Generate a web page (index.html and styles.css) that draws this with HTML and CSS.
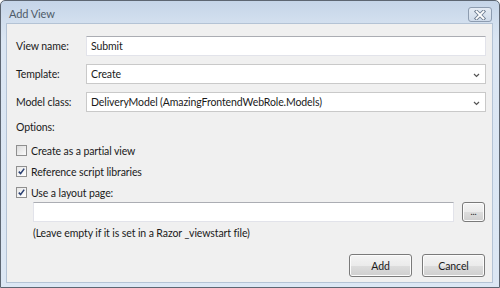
FILE: index.html
```html
<!DOCTYPE html>
<html>
<head>
<meta charset="utf-8">
<link rel="stylesheet" href="styles.css">
</head>
<body>
<div class="window">
  <div class="titlebar">
    <span class="title">Add View</span>
    <div class="close">
      <svg width="14" height="10" viewBox="0 0 14 10">
        <path d="M3.5 1.5 L10.5 8.5 M10.5 1.5 L3.5 8.5" stroke="#6f7e92" stroke-width="3.6" stroke-linecap="square"/>
        <path d="M3.5 1.5 L10.5 8.5 M10.5 1.5 L3.5 8.5" stroke="#ffffff" stroke-width="1.8" stroke-linecap="square"/>
      </svg>
    </div>
  </div>
  <div class="client">
    <div class="row">
      <label class="lbl">View name:</label>
      <div class="field">Submit</div>
    </div>
    <div class="row">
      <label class="lbl">Template:</label>
      <div class="field select">Create<svg class="chev" width="7" height="5" viewBox="0 0 7 5"><path d="M1 1 L3.5 3.5 L6 1" fill="none" stroke="#555" stroke-width="1.2"/></svg></div>
    </div>
    <div class="row">
      <label class="lbl">Model class:</label>
      <div class="field select">DeliveryModel (AmazingFrontendWebRole.Models)<svg class="chev" width="7" height="5" viewBox="0 0 7 5"><path d="M1 1 L3.5 3.5 L6 1" fill="none" stroke="#555" stroke-width="1.2"/></svg></div>
    </div>
    <div class="options">Options:</div>
    <div class="check first"><span class="box"></span>Create as a partial view</div>
    <div class="check"><span class="box on"><svg width="9" height="9" viewBox="0 0 9 9"><path d="M1.8 4.6 L3.6 6.6 L7.2 1.6" fill="none" stroke="#2b4173" stroke-width="1.6"/></svg></span>Reference script libraries</div>
    <div class="check"><span class="box on"><svg width="9" height="9" viewBox="0 0 9 9"><path d="M1.8 4.6 L3.6 6.6 L7.2 1.6" fill="none" stroke="#2b4173" stroke-width="1.6"/></svg></span>Use a layout page:</div>
    <div class="layoutrow">
      <div class="field wide"></div>
      <div class="btn small">...</div>
    </div>
    <div class="hint">(Leave empty if it is set in a Razor _viewstart file)</div>
    <div class="buttons">
      <div class="btn">Add</div>
      <div class="btn">Cancel</div>
    </div>
  </div>
</div>
</body>
</html>
```
FILE: styles.css
```css
html, body {
  margin: 0;
  padding: 0;
  background: #ffffff;
}
body {
  font-family: "Lato", "Open Sans", sans-serif;
  font-size: 10.5px;
  letter-spacing: -0.1px;
  color: #1a1a1a;
}
.window {
  width: 500px;
  height: 288px;
  box-sizing: border-box;
  border: 1px solid #5d6672;
  border-radius: 5px 5px 0 0;
  background: linear-gradient(#c5d5e8, #d3e0ef 22px, #dbe6f3 40px, #dce7f4);
  display: flex;
  flex-direction: column;
  padding: 0 6px 4px 5px;
}
.titlebar {
  height: 22px;
  display: flex;
  align-items: center;
  justify-content: space-between;
  flex: none;
}
.title {
  padding-left: 3px;
  padding-top: 2px;
  color: #4f5b69;
  font-size: 11px;
}
.close {
  width: 24px;
  height: 15px;
  box-sizing: border-box;
  border: 1px solid #8d9cb0;
  border-radius: 3px;
  background: linear-gradient(#e4ebf4, #cfdbea);
  display: flex;
  align-items: center;
  justify-content: center;
  margin-top: 5px;
  margin-right: 1px;
}
.client {
  flex: 1;
  border: 1px solid #b4c3d5;
  background: #f0f0f0;
  padding: 12px 6px 0 9px;
  display: flex;
  flex-direction: column;
}
.row {
  display: flex;
  align-items: center;
  height: 20px;
  margin-bottom: 8px;
}
.lbl {
  width: 70px;
  flex: none;
}
.field {
  flex: 1;
  height: 20px;
  box-sizing: border-box;
  background: #ffffff;
  border: 1px solid #e2e3ea;
  border-top-color: #abadb3;
  padding-left: 4px;
  display: flex;
  align-items: center;
  position: relative;
}
.select {
  border: 1px solid #c9c9c9;
}
.chev {
  position: absolute;
  right: 5px;
  top: 8px;
}
.options {
  height: 14px;
  line-height: 14px;
}
.check {
  display: flex;
  align-items: center;
  height: 21px;
}
.check.first {
  margin-top: 6px;
}
.box {
  width: 11px;
  height: 11px;
  box-sizing: border-box;
  border: 1px solid #8f8f8f;
  background: linear-gradient(135deg, #dcdcdc, #fbfbfb);
  margin-right: 4px;
  display: flex;
  align-items: center;
  justify-content: center;
}
.box.on {
  background: linear-gradient(135deg, #e8e8e8, #ffffff);
}
.layoutrow {
  display: flex;
  align-items: center;
  padding-left: 17px;
  margin-top: -1px;
  height: 20px;
}
.wide {
  flex: none;
  width: 421px;
}
.btn {
  box-sizing: border-box;
  border: 1px solid #7a7a7a;
  border-radius: 3px;
  background: linear-gradient(#f4f4f4, #ebebeb 50%, #dddddd 51%, #cfcfcf);
  display: flex;
  align-items: center;
  justify-content: center;
  width: 63px;
  height: 23px;
  box-shadow: inset 0 0 0 1px #fcfcfc;
}
.btn.small {
  width: 23px;
  height: 20px;
  margin-left: 8px;
  font-size: 9px;
  line-height: 1;
  padding-bottom: 2px;
}
.hint {
  padding-left: 17px;
  height: 22px;
  line-height: 22px;
}
.buttons {
  display: flex;
  justify-content: flex-end;
  gap: 10px;
  margin-top: 10px;
  padding-right: 1px;
}
```
